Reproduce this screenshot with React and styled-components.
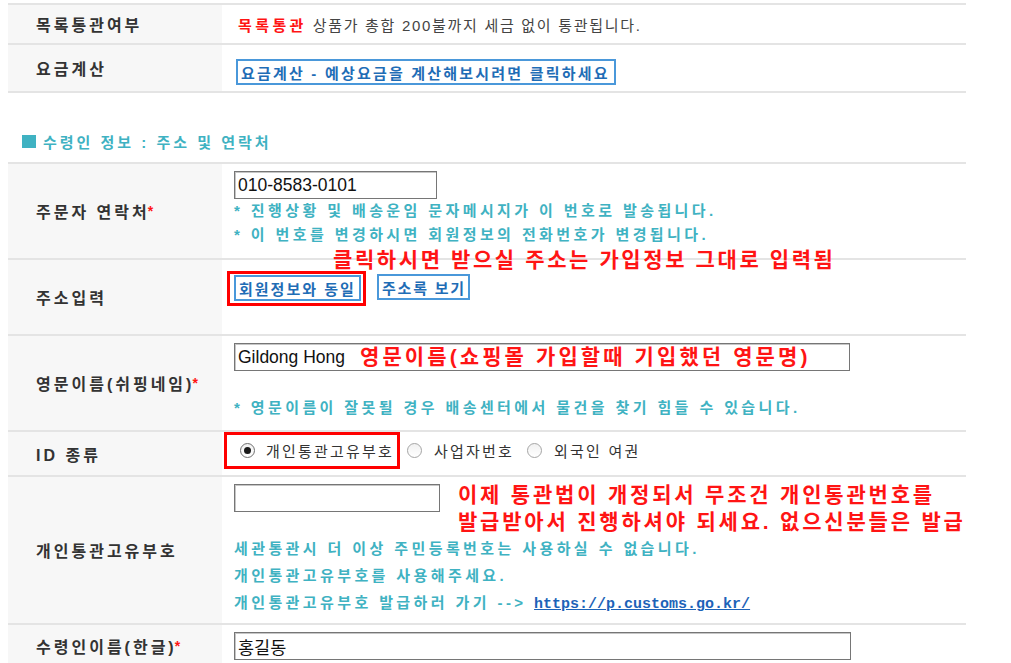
import React from "react";
import styled, { createGlobalStyle } from "styled-components";

const TEAL = "#3fb2c2";
const RED = "#ff1414";
const BLUE = "#1f6db6";

const GlobalStyle = createGlobalStyle`
  body {
    margin: 0;
    background: #fff;
    font-family: "Liberation Sans", "Noto Sans CJK KR", sans-serif;
    color: #333;
  }
`;

const Page = styled.div`
  width: 958px;
  padding: 3px 0 0 8px;
`;

const Table = styled.div`
  border-top: 2px solid #e4e4e4;
`;

const Row = styled.div`
  position: relative;
  display: grid;
  grid-template-columns: 214px 1fr;
  box-sizing: border-box;
  height: ${(p) => p.$h}px;
  border-bottom: 2px solid #e4e4e4;
`;

const Label = styled.div`
  display: flex;
  align-items: center;
  padding-left: 28px;
  background: #f7f7f7;
  font-size: 16px;
  font-weight: 700;
  letter-spacing: 3px;
  color: #333;
  white-space: nowrap;
`;

const Req = styled.span`
  color: ${RED};
  font-size: 14px;
  margin-left: -2px;
`;

const Value = styled.div`
  display: flex;
  flex-direction: column;
  align-items: flex-start;
  justify-content: ${(p) => (p.$center ? "center" : "flex-start")};
  padding: ${(p) => p.$pt || 0}px 12px 0;
  min-width: 0;
`;

const Plain = styled.div`
  padding-left: 4px;
  font-size: 15px;
  letter-spacing: 1.7px;
  color: #444;
  white-space: nowrap;
`;

const Strong = styled.b`
  color: ${RED};
  letter-spacing: 3.4px;
`;

const BoxButton = styled.button`
  box-sizing: border-box;
  width: ${(p) => p.$w}px;
  height: 26px;
  margin: ${(p) => p.$m || 0};
  padding: 0 3px;
  border: 2px solid #4a98da;
  background: #fff;
  color: ${BLUE};
  font-family: inherit;
  font-size: 15px;
  font-weight: 700;
  letter-spacing: ${(p) => p.$ls || 2}px;
  text-align: left;
  white-space: nowrap;
  overflow: hidden;
  cursor: pointer;
`;

const SectionTitle = styled.h3`
  display: flex;
  align-items: center;
  height: 20px;
  margin: 38px 0 11px 14px;
  font-size: 15px;
  font-weight: 700;
  letter-spacing: 3px;
  color: ${TEAL};
`;

const Square = styled.span`
  width: 14px;
  height: 13px;
  margin-right: 7px;
  background: ${TEAL};
`;

const Input = styled.input`
  box-sizing: border-box;
  width: ${(p) => p.$w}px;
  height: 28px;
  margin-top: ${(p) => p.$mt || 0}px;
  padding: 0 3px;
  border: 1px solid #767676;
  box-shadow: inset 1px 1px 0 #c6c6c6;
  background: #fff;
  font-family: "Liberation Sans", "Noto Sans CJK KR", sans-serif;
  font-size: 17.5px;
  color: #111;
  outline: none;
`;

const Note = styled.div`
  margin-top: ${(p) => p.$mt || 0}px;
  font-size: 15px;
  font-weight: 700;
  letter-spacing: 3.4px;
  line-height: ${(p) => p.$lh || 24}px;
  color: ${TEAL};
  white-space: nowrap;
`;

const Link = styled.a`
  font-family: "Liberation Mono", monospace;
  font-size: 15px;
  letter-spacing: 0;
  color: #1d63b8;
  text-decoration: underline;
`;

const Inline = styled.div`
  display: flex;
  align-items: ${(p) => p.$align || "flex-start"};
  gap: ${(p) => p.$gap || 0}px;
`;

const Highlight = styled.div`
  box-sizing: border-box;
  display: flex;
  align-items: center;
  height: ${(p) => p.$h}px;
  margin-left: ${(p) => p.$ml}px;
  padding: ${(p) => p.$pad};
  border: 3px solid #ff0000;
`;

const Callout = styled.div`
  font-size: 21px;
  font-weight: 700;
  letter-spacing: ${(p) => p.$ls || 2.8}px;
  line-height: ${(p) => p.$lh || 24}px;
  color: ${RED};
  white-space: nowrap;
`;

const FloatingCallout = styled(Callout)`
  position: absolute;
  top: -12px;
  left: 325px;
  z-index: 2;
`;

const InputWrap = styled.div`
  position: relative;
`;

const InputCallout = styled(Callout)`
  position: absolute;
  top: 0;
  bottom: 0;
  left: 126px;
  display: flex;
  align-items: center;
  pointer-events: none;
`;

const RadioOption = styled.label`
  display: flex;
  align-items: center;
  gap: ${(p) => p.$gap || 11}px;
  margin-left: ${(p) => p.$ml || 0}px;
  font-size: 15px;
  letter-spacing: 2.2px;
  color: #333;
  white-space: nowrap;
`;

const RadioDot = styled.span`
  position: relative;
  flex: none;
  box-sizing: border-box;
  width: 15px;
  height: 15px;
  border-radius: 50%;
  border: 1px solid ${(p) => (p.$on ? "#6f6f6f" : "#a5a5a5")};
  background: linear-gradient(#f1f1f1, #fff);

  &::after {
    content: "";
    display: ${(p) => (p.$on ? "block" : "none")};
    position: absolute;
    top: 3px;
    left: 3px;
    width: 7px;
    height: 7px;
    border-radius: 50%;
    background: #1a1a1a;
  }
`;

export default function App() {
  return (
    <Page>
      <GlobalStyle />
      <Table>
        <Row $h={40}>
          <Label>목록통관여부</Label>
          <Value $center>
            <Plain>
              <Strong>목록통관</Strong> 상품가 총합 200불까지 세금 없이 통관됩니다.
            </Plain>
          </Value>
        </Row>
        <Row $h={48}>
          <Label>요금계산</Label>
          <Value $pt={14}>
            <BoxButton $w={380} $m="0 0 0 2px" $ls={2.2}>
              요금계산 - 예상요금을 계산해보시려면 클릭하세요
            </BoxButton>
          </Value>
        </Row>
      </Table>

      <SectionTitle>
        <Square />
        수령인 정보 : 주소 및 연락처
      </SectionTitle>

      <Table>
        <Row $h={96}>
          <Label>
            주문자 연락처<Req>*</Req>
          </Label>
          <Value $pt={7}>
            <Input $w={203} defaultValue="010-8583-0101" />
            <Note>* 진행상황 및 배송운임 문자메시지가 이 번호로 발송됩니다.</Note>
            <Note>* 이 번호를 변경하시면 회원정보의 전화번호가 변경됩니다.</Note>
          </Value>
        </Row>
        <Row $h={76}>
          <FloatingCallout $ls={2.6}>클릭하시면 받으실 주소는 가입정보 그대로 입력됨</FloatingCallout>
          <Label>주소입력</Label>
          <Value $pt={11}>
            <Inline>
              <Highlight $h={35} $ml={-7} $pad="0 2px 1px 4px">
                <BoxButton $w={127}>회원정보와 동일</BoxButton>
              </Highlight>
              <BoxButton $w={93} $m="3px 0 0 11px" $ls={1.8}>
                주소록 보기
              </BoxButton>
            </Inline>
          </Value>
        </Row>
        <Row $h={96}>
          <Label>
            영문이름(쉬핑네임)<Req>*</Req>
          </Label>
          <Value $pt={7}>
            <InputWrap>
              <Input $w={616} defaultValue="Gildong Hong" />
              <InputCallout $ls={3.1}>영문이름(쇼핑몰 가입할때 기입했던 영문명)</InputCallout>
            </InputWrap>
            <Note $mt={25}>* 영문이름이 잘못될 경우 배송센터에서 물건을 찾기 힘들 수 있습니다.</Note>
          </Value>
        </Row>
        <Row $h={45}>
          <Label>ID 종류</Label>
          <Value>
            <Inline $align="center">
              <Highlight $h={37} $ml={-10} $pad="0 3px 0 13px">
                <RadioOption>
                  <RadioDot $on />
                  개인통관고유부호
                </RadioOption>
              </Highlight>
              <RadioOption $ml={7} $gap={12}>
                <RadioDot />
                사업자번호
              </RadioOption>
              <RadioOption $ml={13} $gap={12}>
                <RadioDot />
                외국인 여권
              </RadioOption>
            </Inline>
          </Value>
        </Row>
        <Row $h={148}>
          <Label>개인통관고유부호</Label>
          <Value $pt={4}>
            <Inline $gap={18}>
              <Input $w={206} $mt={3} />
              <div>
                <Callout $lh={27}>이제 통관법이 개정되서 무조건 개인통관번호를</Callout>
                <Callout $lh={27}>발급받아서 진행하셔야 되세요. 없으신분들은 발급</Callout>
              </div>
            </Inline>
            <Note $lh={27}>세관통관시 더 이상 주민등록번호는 사용하실 수 없습니다.</Note>
            <Note $lh={27}>개인통관고유부호를 사용해주세요.</Note>
            <Note $lh={27}>
              개인통관고유부호 발급하러 가기 --&gt;{" "}
              <Link href="#">https://p.customs.go.kr/</Link>
            </Note>
          </Value>
        </Row>
        <Row $h={43}>
          <Label>
            수령인이름(한글)<Req>*</Req>
          </Label>
          <Value $pt={7}>
            <Input $w={617} defaultValue="홍길동" />
          </Value>
        </Row>
      </Table>
    </Page>
  );
}
